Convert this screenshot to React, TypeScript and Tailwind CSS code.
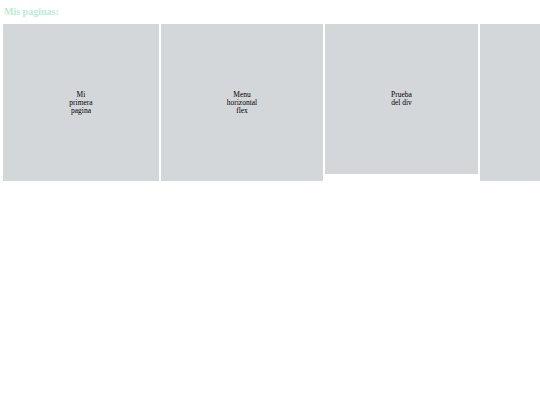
export default function App() {
  const cards = [
    { lines: ['Mi', 'primera', 'pagina'], w: 'w-[156px]', h: 'h-[157px]' },
    { lines: ['Menu', 'horizontal', 'flex'], w: 'w-[162px]', h: 'h-[157px]' },
    { lines: ['Prueba', 'del div'], w: 'w-[153px]', h: 'h-[150px]' },
    { lines: [], w: 'w-[156px]', h: 'h-[157px]' },
  ];

  return (
    <div className="min-h-screen bg-white overflow-hidden font-['Liberation_Serif',serif]">
      <h1 className="px-[4px] pt-[5px] text-[10px] leading-[13px] font-bold text-[#b8ecd3]">Mis paginas:</h1>
      <div className="flex items-start gap-[2px] pl-[3px] pt-[6px] w-max">
        {cards.map((c, i) => (
          <div
            key={i}
            className={`${c.w} ${c.h} shrink-0 bg-[#d4d7da] flex justify-center pt-[67px]`}
          >
            <div className="text-center text-[7.5px] leading-[8px] text-black">
              {c.lines.map((l) => (
                <div key={l}>{l}</div>
              ))}
            </div>
          </div>
        ))}
      </div>
    </div>
  );
}
